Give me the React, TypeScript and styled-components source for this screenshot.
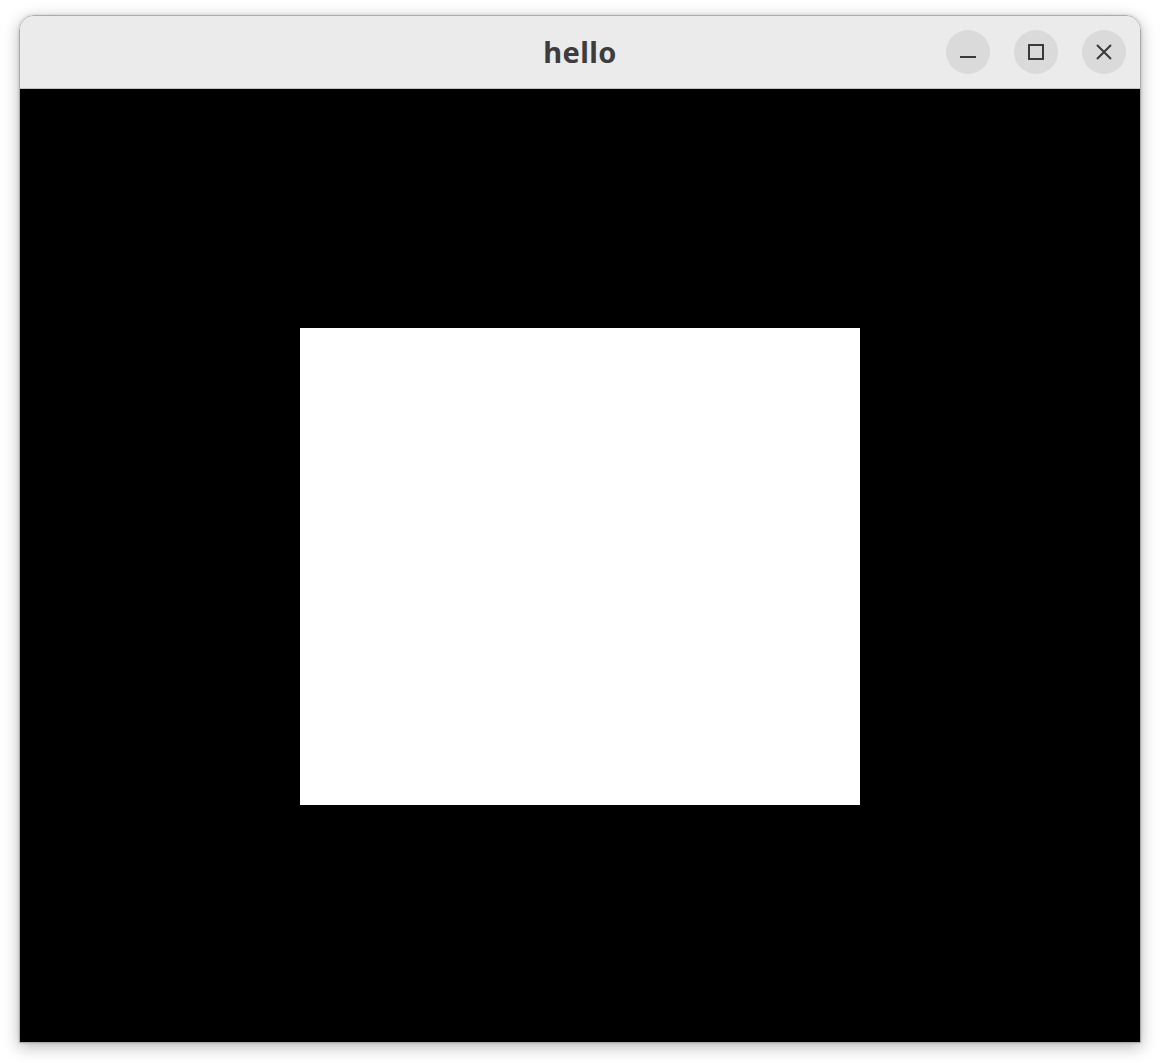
import styled, { createGlobalStyle } from 'styled-components';

const GlobalStyle = createGlobalStyle`
  html, body {
    margin: 0;
    padding: 0;
    background: #ffffff;
  }
`;

const Desktop = styled.div`
  width: 1160px;
  height: 1063px;
  padding: 15px 0 0 19px;
  box-sizing: border-box;
`;

const Window = styled.div`
  width: 1122px;
  height: 1028px;
  box-sizing: border-box;
  border: 1px solid #acacac;
  border-radius: 15px 15px 0 0;
  overflow: hidden;
  display: flex;
  flex-direction: column;
  box-shadow: 0 4px 16px rgba(0, 0, 0, 0.28), 0 0 3px rgba(0, 0, 0, 0.16);
`;

const TitleBar = styled.div`
  height: 73px;
  flex: none;
  box-sizing: border-box;
  background: #ebebeb;
  border-bottom: 1px solid #c0c0c0;
  position: relative;
  display: flex;
  align-items: center;
  justify-content: center;
`;

const Title = styled.div`
  font-family: 'Noto Sans', 'DejaVu Sans', sans-serif;
  font-weight: 700;
  font-size: 29px;
  color: #3d3d3d;
  letter-spacing: 0.4px;
  padding-bottom: 2px;
`;

const Controls = styled.div`
  position: absolute;
  right: 14px;
  top: 14px;
  display: flex;
  gap: 24px;
`;

const ControlButton = styled.button`
  width: 44px;
  height: 44px;
  border: none;
  border-radius: 50%;
  background: #dadada;
  padding: 0;
  display: flex;
  align-items: center;
  justify-content: center;
  color: #3a3a3a;
`;

const Content = styled.div`
  flex: 1;
  background: #000000;
  display: flex;
  align-items: center;
  justify-content: center;
`;

const Canvas = styled.div`
  width: 560px;
  height: 477px;
  background: #ffffff;
  margin-top: 2px;
`;

function MinimizeIcon() {
  return (
    <svg width="16" height="16" viewBox="0 0 16 16">
      <rect x="0" y="12" width="16" height="2" fill="currentColor" />
    </svg>
  );
}

function MaximizeIcon() {
  return (
    <svg width="16" height="16" viewBox="0 0 16 16">
      <rect x="1" y="1" width="14" height="14" fill="none" stroke="currentColor" strokeWidth="2" />
    </svg>
  );
}

function CloseIcon() {
  return (
    <svg width="18" height="18" viewBox="0 0 18 18">
      <path d="M2 2 L16 16 M16 2 L2 16" stroke="currentColor" strokeWidth="2" fill="none" />
    </svg>
  );
}

export default function App() {
  return (
    <>
      <GlobalStyle />
      <Desktop>
        <Window>
          <TitleBar>
            <Title>hello</Title>
            <Controls>
              <ControlButton aria-label="Minimize">
                <MinimizeIcon />
              </ControlButton>
              <ControlButton aria-label="Maximize">
                <MaximizeIcon />
              </ControlButton>
              <ControlButton aria-label="Close">
                <CloseIcon />
              </ControlButton>
            </Controls>
          </TitleBar>
          <Content>
            <Canvas />
          </Content>
        </Window>
      </Desktop>
    </>
  );
}
